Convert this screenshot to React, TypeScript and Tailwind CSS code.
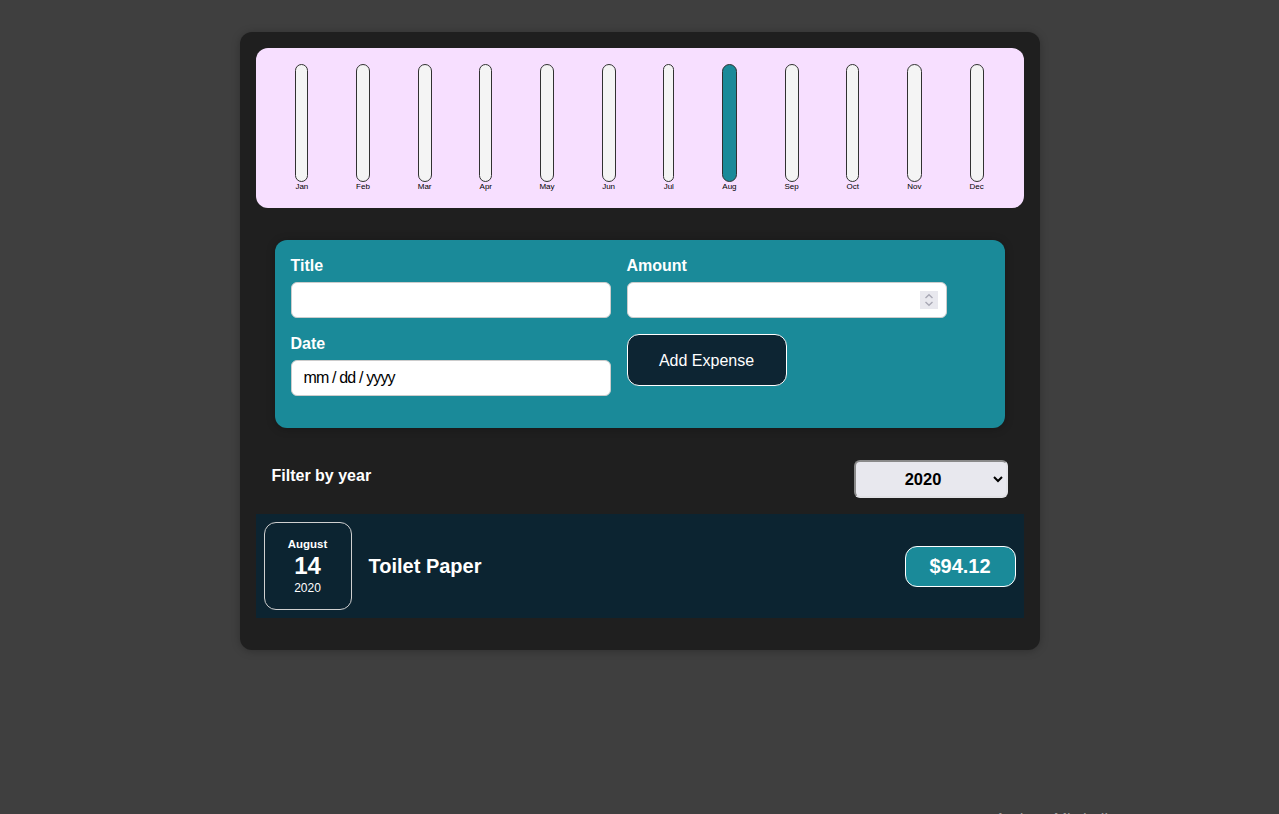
const months = [
  { m: "Jan", w: "w-[13px]" },
  { m: "Feb", w: "w-[14px]" },
  { m: "Mar", w: "w-[14px]" },
  { m: "Apr", w: "w-[13px]" },
  { m: "May", w: "w-[14px]" },
  { m: "Jun", w: "w-[14px]" },
  { m: "Jul", w: "w-[11px]" },
  { m: "Aug", w: "w-[15px]" },
  { m: "Sep", w: "w-[14px]" },
  { m: "Oct", w: "w-[13px]" },
  { m: "Nov", w: "w-[15px]" },
  { m: "Dec", w: "w-[14px]" },
];

export default function App() {
  return (
    <div className="h-[814px] overflow-hidden bg-[#3f3f3f] pt-8 font-['Liberation_Sans',Arial,sans-serif] text-white">
      <main className="mx-auto w-[800px] rounded-xl bg-[#1f1f1f] p-4 pb-8 shadow-[0_1px_8px_rgba(0,0,0,0.25)]">
        <section className="flex h-40 justify-around rounded-xl bg-[#f7dfff] p-4">
          {months.map(({ m, w }) => (
            <div key={m} className={`flex flex-col items-center ${w}`}>
              <div className={`h-[118px] w-full shrink-0 rounded-xl border border-[#313131] ${m === "Aug" ? "bg-[#1a8a99]" : "bg-[#f4f4f4]"}`} />
              <div className="text-center text-[8px] leading-[10px] text-black">{m}</div>
            </div>
          ))}
        </section>

        <form className="mx-auto mt-8 grid w-[730px] grid-cols-[320px_320px] gap-4 rounded-xl bg-[#1a8a99] p-4 pb-8 shadow-[0_1px_8px_rgba(0,0,0,0.25)]">
          <label className="flex flex-col gap-[6px] text-base leading-[20px] font-bold">
            Title
            <input type="text" className="h-9 rounded-md border border-[#ccc] bg-white px-3 font-normal text-black" />
          </label>
          <label className="flex flex-col gap-[6px] text-base leading-[20px] font-bold">
            Amount
            <span className="relative block">
              <input type="text" className="block h-9 w-full rounded-md border border-[#ccc] bg-white px-3 font-normal text-black" />
              <span className="absolute top-[9px] right-[9px] flex h-[18px] w-[18px] items-center justify-center bg-[#e8e8ee]">
                <svg width="10" height="14" viewBox="0 0 10 14" fill="none" stroke="#a8a8b4" strokeWidth="1.4">
                  <path d="M1.5 5 5 1.8 8.5 5" />
                  <path d="M1.5 9 5 12.2 8.5 9" />
                </svg>
              </span>
            </span>
          </label>
          <label className="flex flex-col gap-[6px] text-base leading-[20px] font-bold">
            Date
            <input type="text" readOnly value="mm / dd / yyyy" className="h-9 rounded-md border border-[#ccc] bg-white px-3 font-normal tracking-[-0.85px] text-black" />
          </label>
          <button type="button" className="h-[52px] w-40 self-start rounded-xl border border-white bg-[#0d2533] pt-px text-base text-white">
            Add Expense
          </button>
        </form>

        <div className="mt-8 flex items-start justify-between px-4">
          <span className="mt-[6px] text-base leading-[20px] font-bold">Filter by year</span>
          <select className="h-[38px] w-[154px] rounded-md border-2 border-t-[#8a8a8a] border-r-[#e2e2e6] border-b-[#e2e2e6] border-l-[#8a8a8a] bg-[#e8e8ee] pr-[3px] text-center text-[16.5px] font-bold text-black">
            <option>2020</option>
          </select>
        </div>

        <article className="mt-4 flex h-[104px] items-center bg-[#0c2431] p-2">
          <div className="flex h-[88px] w-[88px] flex-col items-center justify-center rounded-xl border border-[#d0d0d0] text-center">
            <span className="text-[11.5px] leading-[14px] font-bold">August</span>
            <span className="mt-px text-2xl leading-[28px] font-bold">14</span>
            <span className="text-xs leading-[16px]">2020</span>
          </div>
          <h2 className="ml-[17px] flex-1 text-xl leading-[23px] font-bold">Toilet Paper</h2>
          <div className="w-[111px] rounded-xl border border-white bg-[#1a8a99] py-2 text-center text-xl leading-[23px] font-bold">$94.12</div>
        </article>
      </main>
      <footer className="mt-[161px] ml-[995px] text-base leading-[18px] whitespace-nowrap text-[#a0a0a0]">Andrew Mitchell</footer>
    </div>
  );
}
